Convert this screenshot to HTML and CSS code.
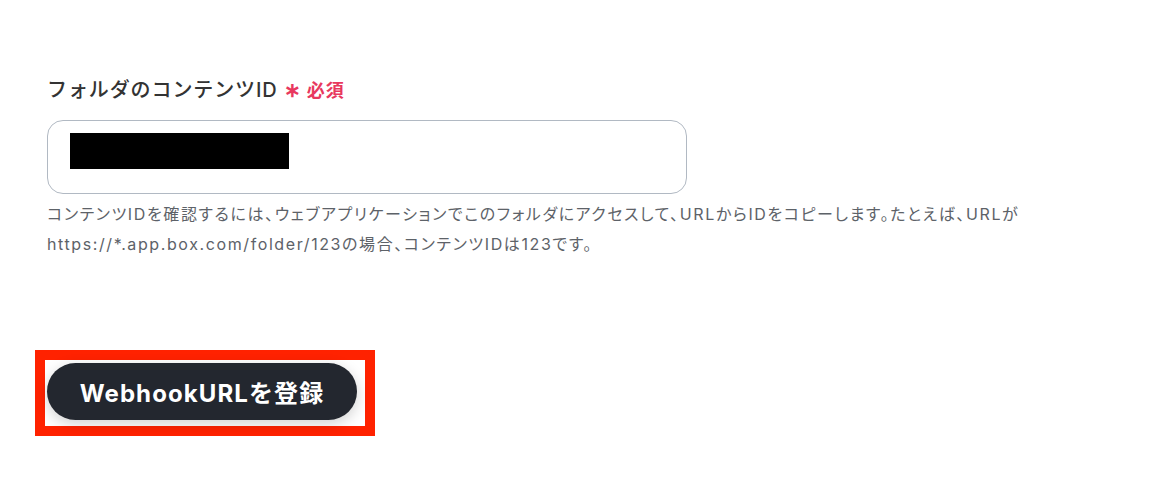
FILE: index.html
```html
<!DOCTYPE html>
<html lang="ja">
<head>
<meta charset="UTF-8">
<meta name="viewport" content="width=device-width, initial-scale=1.0">
<title>WebhookURLを登録</title>
<link rel="stylesheet" href="styles.css">
</head>
<body>

<div class="container">
    <div class="field">
        <label class="field-label" for="folder-id">フォルダのコンテンツID <span class="req-mark">∗</span><span class="req">必須</span></label>
        <div class="input-box" id="folder-id">
            <span class="redacted"></span>
        </div>
        <p class="help">コンテンツIDを確認するには、ウェブアプリケーションでこのフォルダにアクセスして、URLからIDをコピーします。たとえば、URLが<br>https://*.app.box.com/folder/123の場合、コンテンツIDは123です。</p>
    </div>

    <div class="highlight">
        <button class="btn-register">WebhookURLを登録</button>
    </div>
</div>

</body>
</html>
```

FILE: styles.css
```css
body {
    font-family: Inter, "Noto Sans CJK JP", sans-serif;
    margin: 0;
    padding: 0;
    background-color: #fff;
    color: #333;
}
.container {
    padding: 76px 0 0 47px;
}

.field-label {
    display: block;
    font-size: 20px;
    font-weight: 500;
    line-height: 28px;
    color: #333;
    letter-spacing: 0.9px;
}
.req-mark {
    color: #e8385e;
    font-weight: 700;
}
.req {
    color: #e8385e;
    font-size: 18px;
    font-weight: 700;
    margin-left: 5px;
}

.input-box {
    box-sizing: border-box;
    width: 640px;
    height: 74px;
    margin-top: 15px;
    border: 1px solid #b1b9c3;
    border-radius: 16px;
    padding: 12px 22px;
}
.redacted {
    display: block;
    width: 219px;
    height: 36px;
    background-color: #000;
}

.help {
    margin: 5px 0 0;
    font-size: 16px;
    line-height: 30px;
    letter-spacing: 1.6px;
    font-feature-settings: "palt";
    color: #5d6268;
}

.highlight {
    display: inline-block;
    margin: 91px 0 0 -12px;
    border: 10px solid #ff2200;
    padding: 3px 8px 6px 2px;
}
.btn-register {
    display: block;
    width: 310px;
    height: 57px;
    border: none;
    border-radius: 29px;
    background-color: #23272f;
    color: #fff;
    font-family: Inter, "Noto Sans CJK JP", sans-serif;
    font-size: 24px;
    font-weight: 700;
    letter-spacing: 1.1px;
    box-shadow: 0 4px 14px rgba(0, 0, 0, 0.18);
    cursor: pointer;
}
```
